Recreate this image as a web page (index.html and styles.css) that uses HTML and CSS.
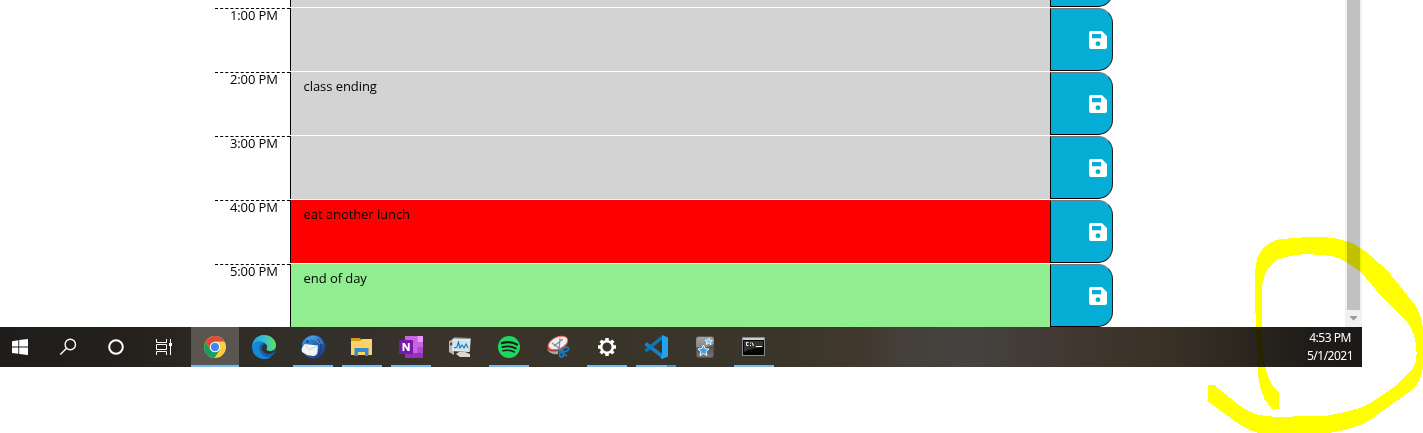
FILE: index.html
```
<!DOCTYPE html>
<html lang="en">
<head>
<meta charset="utf-8">
<title>Work Day Scheduler</title>
<link rel="stylesheet" href="styles.css">
</head>
<body>
<svg class="defs" width="0" height="0">
  <symbol id="save" viewBox="0 0 18 18"><path fill="#fff" fill-rule="evenodd" d="M2 0H12.8L18 5V16Q18 18 16 18H2Q0 18 0 16V2Q0 0 2 0ZM3 3V7.2H12V3ZM9 10.2a2.4 2.4 0 1 0 .01 0Z"/></symbol>
  <linearGradient id="edgeTop" x1="0" x2="1"><stop offset="0" stop-color="#2a9fdc"/><stop offset=".5" stop-color="#33c2cf"/><stop offset="1" stop-color="#66df5b"/></linearGradient>
  <linearGradient id="bird" x1="0" x2="1" y1="0" y2="1"><stop offset="0" stop-color="#39a0e8"/><stop offset=".5" stop-color="#2864b5"/><stop offset="1" stop-color="#1c2f78"/></linearGradient>
  <linearGradient id="steel" x1="0" x2="0" y1="0" y2="1"><stop offset="0" stop-color="#999"/><stop offset=".5" stop-color="#555"/><stop offset="1" stop-color="#777"/></linearGradient>
</svg>
<div class="screen">
  <div class="window">
    <main class="planner">
      <div class="row"><div class="hour"></div><div class="task past"></div><button class="save"></button></div>
      <div class="row"><div class="hour">1:00 PM</div><div class="task past"></div><button class="save"><svg class="disk"><use href="#save"/></svg></button></div>
      <div class="row"><div class="hour">2:00 PM</div><div class="task past">class ending</div><button class="save"><svg class="disk"><use href="#save"/></svg></button></div>
      <div class="row"><div class="hour">3:00 PM</div><div class="task past"></div><button class="save"><svg class="disk"><use href="#save"/></svg></button></div>
      <div class="row"><div class="hour">4:00 PM</div><div class="task present">eat another lunch</div><button class="save"><svg class="disk"><use href="#save"/></svg></button></div>
      <div class="row"><div class="hour">5:00 PM</div><div class="task future">end of day</div><button class="save"><svg class="disk"><use href="#save"/></svg></button></div>
    </main>
    <div class="scrollbar"><div class="thumb"></div><svg class="arrow" viewBox="0 0 17 17"><path fill="#9c9c9c" d="M5 6H12V7L8.5 10.5L5 7Z"/></svg></div>
  </div>
  <footer class="taskbar">
    <div class="system">
      <svg class="cell" viewBox="0 0 48 40"><path fill="#fff" d="M16 14.3 22.3 13.3V19.6H16ZM23.2 13.1 32 12V19.6H23.2ZM16 20.5H22.3V26.8L16 25.9ZM23.2 20.5H32V28L23.2 26.9Z"/></svg>
      <svg class="cell" viewBox="0 0 48 40" fill="none" stroke="#fff" stroke-width="1.4"><circle cx="26.3" cy="17.5" r="5.2"/><path d="M22.6 21.2 16.3 27.6"/></svg>
      <svg class="cell" viewBox="0 0 48 40"><circle cx="24" cy="20" r="6.8" fill="none" stroke="#fff" stroke-width="2"/></svg>
      <svg class="cell" viewBox="0 0 48 40" fill="none" stroke="#fff" stroke-width="1"><path d="M16.5 12V15.5H26.5V12M16.5 28V24.5H26.5V28M16.5 17.5H26.5V22.5H16.5ZM30.5 12V28"/><path fill="#fff" stroke="none" d="M29 16H32V19H29Z"/></svg>
    </div>
    <div class="apps">
      <div class="app active"><svg class="cell" viewBox="0 0 48 40"><circle cx="24" cy="20" r="11" fill="#ffcd40"/><path fill="#dc4c3e" d="M14.5 14.5A11 11 0 0 1 33.5 14.5H24L19.2 22.5Z"/><path fill="#159f5c" d="M14.5 14.5A11 11 0 0 0 23.5 31L28.8 22.8H19.2Z"/><circle cx="24" cy="20" r="5.2" fill="#fff"/><circle cx="24" cy="20" r="4.2" fill="#4285f4"/></svg></div>
      <div class="app"><svg class="cell" viewBox="0 0 48 40"><circle cx="24" cy="20" r="12" fill="#1261ae"/><path fill="#1787d5" d="M12 19C13 14 20 12 25 15C19 17 18 22 21 26C23 30 28 31 31 29.7C26 34 16 32 13 25Z"/><path fill="url(#edgeTop)" d="M12 19C13 12 18 8 24 8C31 8 36 13 36 18C36 23 31 25 27 23.5C25.5 22.8 26 22 27 21C28 18 24 14 19 14.3C16 14.5 13 16 12 19Z"/><path fill="#34302a" d="M23 18C27 15.5 28 20 26.3 22C27 24.8 32 25.5 36 22.2C34 26.5 30 27.5 26.5 26.5C22 25.3 20.5 21 23 18Z"/></svg></div>
      <div class="app open"><svg class="cell" viewBox="0 0 48 40"><path fill="url(#bird)" d="M13 18Q13 14 16 12Q18 9 22 8.500C29 7 35 11 36 18C37 25 32 32 24 31.500C17 31 12 25 13 18Z"/><path fill="#f4f4f4" d="M15.500 17 29 18.500 28.500 25Q28 29 24 29L18 28 13 25 12.500 22Z"/><path fill="none" stroke="#c4c4c4" stroke-width=".8" d="M15.500 17.500 20 22.500 29 19"/><path fill="none" stroke="#5badeb" d="M18 12Q26 9 31 17M22 9.500Q30 9 33 17"/><path fill="none" stroke="#153f87" d="M29 12Q34 18 30 28"/><circle cx="18.500" cy="14.500" r="1" fill="#123"/></svg></div>
      <div class="app open"><svg class="cell" viewBox="0 0 48 40"><path fill="#d99a1e" d="M13 11H22L23.5 13V15H13Z"/><path fill="#ffd265" d="M13 14H22L24 12H34V28H13Z"/><path fill="#338dd2" d="M16.5 21H30.5V29H27V25H20V29H16.5Z"/></svg></div>
      <div class="app open"><svg class="cell" viewBox="0 0 48 40"><path fill="#ca64e0" d="M18 9H36V31H18Z"/><path fill="#e59af5" d="M30.5 9H36V15H30.5Z"/><path fill="#c466df" d="M30.5 15H36V20H30.5Z"/><path fill="#ad4bcb" d="M30.5 20H36V26H30.5Z"/><path fill="#9332bf" d="M30.5 26H36V31H18V26Z"/><rect x="12" y="13" width="14" height="14" rx="1" fill="#7719aa"/><path fill="#fff" d="M15.500 16H17.700L20.800 21V16H22.700V24H20.600L17.400 19V24H15.500Z"/></svg></div>
      <div class="app"><svg class="cell" viewBox="0 0 48 40"><path fill="#b8b9b4" d="M13 14 18 12V28L13 25Z"/><path fill="#474b45" d="M14 16 17 15V18L14 18.5Z"/><path fill="#7d827c" d="M18 10 35 11 34 25 16 24Z"/><path fill="#e6e6e2" d="M16.5 11.5 34.5 12 33.5 25 16 24Z"/><path fill="#c9e4f3" d="M18 13.5 33 14 32 23.5 18 22.5Z"/><path fill="none" stroke="#1675b9" stroke-width="1.1" d="M18 21 21 20 22.5 15 24 21 26 18 28 21 30 17 32 21"/><path fill="#d8d8d4" d="M23 25H29L34 27V30H24L20 27Z"/></svg></div>
      <div class="app open"><svg class="cell" viewBox="0 0 48 40"><circle cx="24" cy="20" r="11" fill="#1ed760"/><g fill="none" stroke="#171c17" stroke-linecap="round"><path stroke-width="2.3" d="M17 16.2Q25 13.5 32 17.5"/><path stroke-width="1.9" d="M17.5 20.2Q24.5 18 30.7 21.4"/><path stroke-width="1.6" d="M18 23.8Q24 22.2 29.3 25"/></g></svg></div>
      <div class="app"><svg class="cell" viewBox="0 0 48 40"><ellipse cx="23.5" cy="17.5" rx="11" ry="6.8" fill="#ba3432" transform="rotate(-24 23.5 17.5)"/><ellipse cx="24" cy="16" rx="10.3" ry="5.9" fill="#eee" stroke="#e96460" transform="rotate(-24 24 16)"/><path fill="#aaa" d="M12.5 21Q15 26 24 24V27Q15 28 12.5 21Z"/><path fill="none" stroke="#87898a" stroke-width="1.2" d="M18 16 29 24M26 11 25 24M20 19 29 12"/><g fill="none" stroke="#147dc2" stroke-width="1.8"><ellipse cx="31.5" cy="22.5" rx="3.2" ry="2" transform="rotate(-20 31.5 22.5)"/><ellipse cx="27.5" cy="27.5" rx="2" ry="2.7"/><path d="M24 23 33 29"/></g></svg></div>
      <div class="app open"><svg class="cell" viewBox="0 0 48 40"><circle cx="24" cy="20" r="5.8" fill="none" stroke="#fff" stroke-width="2.5"/><g stroke="#fff" stroke-width="3.5"><path d="M24 11V14M24 26V29M15 20H18M30 20H33"/><path d="M24 11V14M24 26V29M15 20H18M30 20H33" transform="rotate(45 24 20)"/></g></svg></div>
      <div class="app open split"><svg class="cell" viewBox="0 0 48 40"><path fill="none" stroke="#1681c9" stroke-width="3.5" d="M13.5 16.5 30 29"/><path fill="none" stroke="#0877bc" stroke-width="3.5" d="M13.5 24 30 10.5"/><path fill="#24a2ed" d="M30 8 36 10.5V29.5L30 32L28.5 30.5 30 28Z"/></svg></div>
      <div class="app"><svg class="cell" viewBox="0 0 48 40"><rect x="15.5" y="9.5" width="17" height="21" rx="2.5" fill="url(#steel)" stroke="#555"/><path fill="#aaa" opacity=".6" d="M17 10H31Q33 10 33 12V17Q25 22 15 20V12Q15 10 17 10Z"/><path fill="#41a2e8" stroke="#eefaff" d="M22.5 18 24.2 21.7 28 22 25.2 24.6 26 28.5 22.5 26.6 19 28.5 19.8 24.7 17 22 20.8 21.5Z"/><path fill="#83c9f3" stroke="#eefaff" stroke-width=".8" d="M28 11 29 13.4 31.5 13.5 29.6 15.2 30 17.7 27.5 16.3 25 17.5 25.7 15 24 13 26.5 13Z"/></svg></div>
      <div class="app open"><svg class="cell" viewBox="0 0 48 40"><rect x="12.5" y="10.5" width="22" height="18" fill="#050505" stroke="#88898a"/><path fill="#ccc" d="M13 11H34V13H13Z"/><path fill="#333" d="M14 14H33V20Q22 21 14 25Z"/><path fill="none" stroke="#fff" d="M18.5 15.5H16.5V18.5H18.5M20.5 15.5V16.5M20.5 18V19M22 15.5 23.5 19M26 19.5H32"/></svg></div>
    </div>
    <div class="clock"><span>4:53 PM</span><span>5/1/2021</span></div>
  </footer>
  <svg class="marker" viewBox="0 0 1423 433" shape-rendering="crispEdges"><path fill="#ff0" d="M1278.500 408.700H1272Q1259 397 1257.500 367L1255 300V275Q1256 256 1262 250Q1270 240 1282 239L1309 237H1322Q1341 238 1354 244L1365 251Q1380 263 1392 276L1415 305Q1421 314 1422.500 326L1423 367Q1421 382 1413 389L1391 405Q1376 416 1363 424Q1345 431 1328 433H1258Q1244 429 1228 416L1208 401.500V385H1214L1230 398Q1244 410 1258 415L1276 417L1328 415.500Q1343 413 1360 408Q1370 404 1381 396L1397 385L1413 368Q1417 361 1416.500 352Q1416 334 1408 323L1376 290Q1366 277 1358 270Q1346 261 1333 256L1307 254Q1288 255 1277 260Q1263 270 1262 287V325Q1262 361 1268 376Q1271 386 1278.500 392Z"/></svg>
</div>
</body>
</html>
```
FILE: styles.css
```
* { box-sizing: border-box; }
body { margin: 0; background: #fff; overflow: hidden; }
.defs { position: absolute; }
.screen { position: relative; width: 1423px; height: 433px; overflow: hidden; }
.window { display: flex; justify-content: space-between; width: 1362px; height: 327px; overflow: hidden; }
.planner { display: flex; flex-direction: column; justify-content: flex-end; width: 898px; height: 328px; margin-left: 215px; font: 13px/16px "Open Sans", sans-serif; color: #000; }
.row { display: flex; flex: none; height: 64px; padding-bottom: 1px; }
.hour { width: 75px; padding-right: 12px; border-top: 1px dashed #000; line-height: 12px; letter-spacing: -0.07px; text-align: right; }
.task { width: 760px; padding: 6px 12.6px; border-left: 1px solid #000; letter-spacing: -0.07px; }
.past { background: #d3d3d3; }
.present { background: #f00; }
.future { background: #90ee90; }
.save { display: flex; align-items: center; justify-content: flex-end; width: 63px; height: 63px; padding: 0 5px 0 0; background: #06aed5; border: 1px solid #000; border-top-color: #767676; border-right-color: #222; border-radius: 0 15px 15px 0; }
.disk { width: 18px; height: 18px; }
.scrollbar { display: flex; flex-direction: column; align-items: center; width: 17px; background: #f1f1f1; }
.thumb { width: 13px; height: 310px; background: #c1c1c1; }
.arrow { width: 17px; height: 17px; }
.taskbar { display: flex; width: 1362px; height: 40px; background: linear-gradient(90deg, #1e1d1b 0, #24211d 130px, #302d28 240px, #35312a 370px, #3b332b 460px, #38342a 580px, #3b362a 800px, #41372e 860px, #444039 900px, #454340 970px, #423c37 1030px, #41362d 1090px, #382f25 1180px, #28241d 1260px, #1e1c1a 1310px, #1b1a18 1362px); }
.system { display: flex; margin-left: -4px; }
.cell { display: block; flex: none; width: 48px; height: 40px; }
.apps { display: flex; gap: 1px; margin-left: 3px; }
.app { display: flex; flex-direction: column; align-items: center; width: 48px; height: 40px; }
.app::after { content: ""; flex: none; width: 40px; height: 2px; margin-top: -2px; }
.open::after { background: #76b9ed; }
.active { background: #595650; }
.active::after { width: 48px; background: #76b9ed; }
.split::after { background: linear-gradient(90deg, #76b9ed 31px, #4a6f8c 31px, #5a8db4 32px); }
.clock { display: flex; flex-direction: column; align-items: center; width: 60px; margin-right: 2px; margin-left: auto; padding-top: 2px; font: 12px/18px "Noto Sans", sans-serif; letter-spacing: -0.5px; color: #fff; }
.marker { position: absolute; inset: 0; width: 1423px; height: 433px; mix-blend-mode: multiply; }
```
